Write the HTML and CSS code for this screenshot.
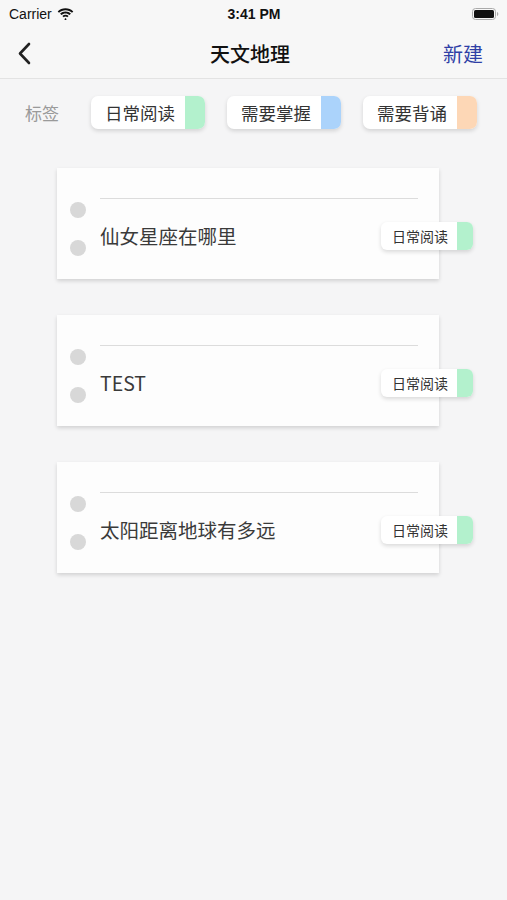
FILE: index.html
```html
<!DOCTYPE html>
<html lang="zh-CN">
<head>
  <meta charset="UTF-8" />
  <meta name="viewport" content="width=device-width, initial-scale=1.0"/>
  <title>天文地理</title>
  <link rel="stylesheet" href="styles.css">
</head>
<body>
  <div class="topbar">
    <div class="statusbar">
      <div class="carrier">
        Carrier
        <svg class="wifi" width="17" height="12" viewBox="0 0 17 12">
          <path d="M8.5 2.2c2.5 0 4.8 1 6.5 2.6l1.3-1.4C14.3 1.5 11.5.3 8.5.3S2.7 1.5.7 3.4L2 4.8c1.7-1.6 4-2.6 6.5-2.6z" fill="#111"/>
          <path d="M8.5 5.4c1.6 0 3 .6 4.1 1.6l1.3-1.4C12.5 4.3 10.6 3.5 8.5 3.5S4.5 4.3 3.1 5.6L4.4 7c1.1-1 2.5-1.6 4.1-1.6z" fill="#111"/>
          <path d="M8.5 8.6c.7 0 1.3.3 1.8.7l1.3-1.4c-.8-.8-1.9-1.2-3.1-1.2s-2.3.4-3.1 1.2l1.3 1.4c.5-.4 1.1-.7 1.8-.7z" fill="#111"/>
          <path d="M8.5 9.9l-1.2 1.3 1.2 1.2 1.2-1.2z" fill="#111"/>
        </svg>
      </div>
      <div class="time">3:41 PM</div>
      <div class="battery">
        <svg width="27" height="12" viewBox="0 0 27 12">
          <rect x="0.5" y="0.5" width="23" height="11" rx="3" fill="none" stroke="#aaa"/>
          <rect x="2" y="2" width="20" height="8" rx="1.5" fill="#111"/>
          <path d="M25 4v4c.8-.3 1.3-1.1 1.3-2S25.8 4.3 25 4z" fill="#aaa"/>
        </svg>
      </div>
    </div>
    <div class="navbar">
      <div class="back">
        <svg width="14" height="23" viewBox="0 0 14 23">
          <path d="M12 2L3 11.5 12 21" fill="none" stroke="#222" stroke-width="2.6" stroke-linecap="round" stroke-linejoin="round"/>
        </svg>
      </div>
      <div class="title">天文地理</div>
      <div class="action">新建</div>
    </div>
  </div>

  <div class="tags">
    <span class="tags-label">标签</span>
    <div class="chip"><span class="chip-text">日常阅读</span><span class="chip-mark green"></span></div>
    <div class="chip"><span class="chip-text">需要掌握</span><span class="chip-mark blue"></span></div>
    <div class="chip"><span class="chip-text">需要背诵</span><span class="chip-mark orange"></span></div>
  </div>

  <div class="list">
    <div class="card">
      <div class="dots"><span class="dot"></span><span class="dot"></span></div>
      <div class="card-main">
        <div class="card-line"></div>
        <div class="card-row">
          <span class="card-text">仙女星座在哪里</span>
          <div class="chip small"><span class="chip-text">日常阅读</span><span class="chip-mark green"></span></div>
        </div>
      </div>
    </div>

    <div class="card">
      <div class="dots"><span class="dot"></span><span class="dot"></span></div>
      <div class="card-main">
        <div class="card-line"></div>
        <div class="card-row">
          <span class="card-text">TEST</span>
          <div class="chip small"><span class="chip-text">日常阅读</span><span class="chip-mark green"></span></div>
        </div>
      </div>
    </div>

    <div class="card">
      <div class="dots"><span class="dot"></span><span class="dot"></span></div>
      <div class="card-main">
        <div class="card-line"></div>
        <div class="card-row">
          <span class="card-text">太阳距离地球有多远</span>
          <div class="chip small"><span class="chip-text">日常阅读</span><span class="chip-mark green"></span></div>
        </div>
      </div>
    </div>
  </div>
</body>
</html>
```

FILE: styles.css
```css
body {
  margin: 0;
  width: 507px;
  min-height: 900px;
  font-family: "Noto Sans CJK SC", "Liberation Sans", sans-serif;
  background: #f5f5f6;
  color: #333;
}

.topbar {
  background: #f7f7f7;
  border-bottom: 1px solid #e3e3e3;
}

.statusbar {
  height: 28px;
  display: flex;
  align-items: center;
  justify-content: space-between;
  padding: 0 8px 0 9px;
  font-family: "Liberation Sans", sans-serif;
  font-size: 14px;
  color: #111;
}

.carrier {
  display: flex;
  align-items: center;
  gap: 5px;
  width: 120px;
}

.time {
  font-weight: bold;
  font-size: 14px;
}

.battery {
  width: 120px;
  display: flex;
  justify-content: flex-end;
}

.navbar {
  height: 50px;
  display: flex;
  align-items: center;
  justify-content: space-between;
  padding: 0 24px 0 17px;
}

.back {
  width: 70px;
  display: flex;
}

.title {
  font-size: 20px;
  font-weight: 500;
  color: #111;
}

.action {
  width: 70px;
  text-align: right;
  font-size: 20px;
  color: #2f3fa6;
}

.tags {
  display: flex;
  align-items: center;
  padding: 17px 0 0 25px;
  gap: 22px;
}

.tags-label {
  font-size: 17px;
  color: #9a9a9a;
  margin-right: 10px;
}

.chip {
  display: flex;
  height: 33px;
  width: 114px;
  background: #fff;
  border-radius: 7px;
  overflow: hidden;
  box-shadow: 0 2px 4px rgba(0, 0, 0, 0.14);
}

.chip-text {
  flex: 1;
  display: flex;
  align-items: center;
  justify-content: center;
  padding-left: 4px;
  font-size: 17.5px;
  color: #333;
}

.chip-mark {
  width: 20px;
}

.green { background: #b3f1cd; }
.blue { background: #abd3fb; }
.orange { background: #fdd7b6; }

.list {
  display: flex;
  flex-direction: column;
  gap: 36px;
  padding: 39px 0 0 57px;
}

.card {
  width: 382px;
  height: 111px;
  box-sizing: border-box;
  background: #fdfdfd;
  box-shadow: 0 2px 4px rgba(0, 0, 0, 0.15);
  display: flex;
}

.dots {
  display: flex;
  flex-direction: column;
  gap: 22px;
  padding: 34px 14px 0 13px;
}

.dot {
  width: 16px;
  height: 16px;
  border-radius: 50%;
  background: #d8d8d8;
}

.card-main {
  flex: 1;
  padding: 30px 21px 0 0;
}

.card-line {
  height: 1px;
  background: #dcdcdc;
}

.card-row {
  display: flex;
  align-items: center;
  justify-content: space-between;
  margin-top: 22px;
  margin-right: -55px;
}

.card-text {
  font-size: 19.5px;
  color: #3a3a3a;
}

.chip.small {
  width: 92px;
  height: 28px;
  border-radius: 6px;
}

.chip.small .chip-text {
  font-size: 14px;
  padding-left: 2px;
}

.chip.small .chip-mark {
  width: 16px;
}
```
